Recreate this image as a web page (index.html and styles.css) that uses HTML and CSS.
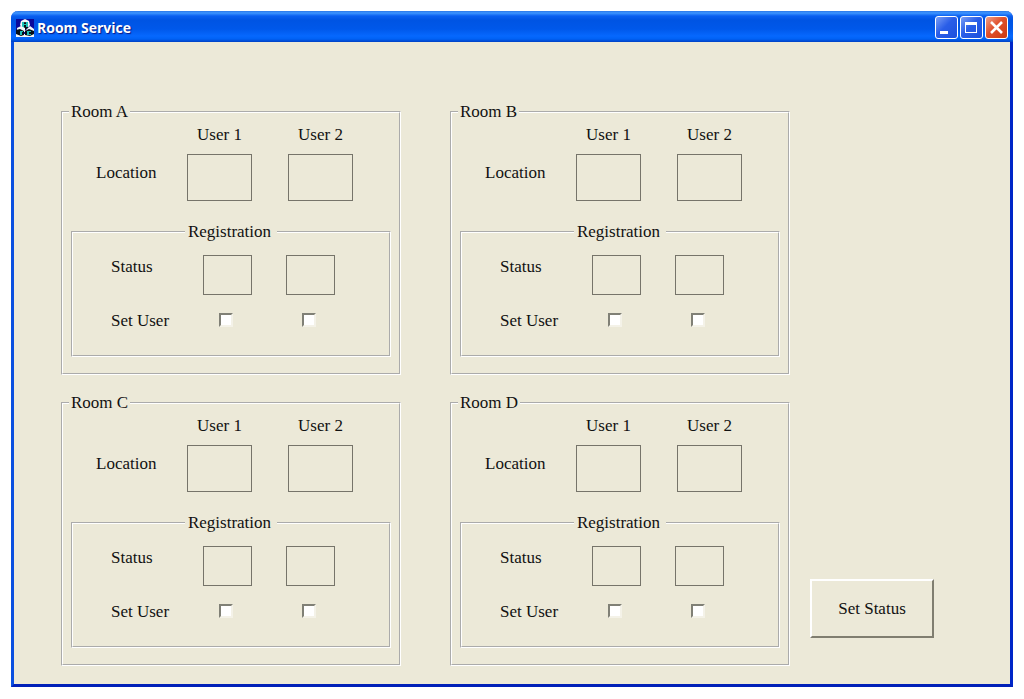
FILE: index.html
```html
<!DOCTYPE html>
<html lang="en">
<head>
    <meta charset="UTF-8">
    <meta name="viewport" content="width=device-width, initial-scale=1.0">
    <title>Room Service</title>
    <link rel="stylesheet" href="styles.css">
</head>
<body>

<div class="window">
    <!-- title bar -->
    <header class="titlebar">
        <svg class="app-icon" viewBox="0 0 18 18" aria-hidden="true">
            <rect width="18" height="18" fill="#0a0a9c"/>
            <path d="M0 15h18v3H0z" fill="#f4f8f8"/>
            <path d="M5 2l4-2 4 2 1 4-3 4H7L4 6z" fill="#f4f8f8"/>
            <path d="M6 4l3-1 3 1v5l-3 2-3-2z" fill="#061018"/>
            <path d="M6 3h2v2h2V3h2v5h-2V6H8v3H6z" fill="#1cc0b4"/>
            <path d="M1 9l4-2 4 2v3l5-5 4 3v3H1z" fill="#f4f8f8"/>
            <path d="M0 11l4-1 4 2v4l-3 1-5-2z" fill="#061018"/>
            <path d="M4 12h3v1H6v3H4z" fill="#1cc0b4"/>
            <path d="M9 12l4-2 5 2v3l-4 2-5-1z" fill="#061018"/>
            <path d="M11 12h4v1h-2v2h2v1h-4z" fill="#1cc0b4"/>
        </svg>
        <h1>Room Service</h1>
        <div class="window-buttons">
            <button type="button" class="win-btn" aria-label="Minimize">
                <svg viewBox="0 0 21 21"><path d="M4 14h8v3H4z" fill="#fff"/></svg>
            </button>
            <button type="button" class="win-btn" aria-label="Maximize">
                <svg viewBox="0 0 21 21"><path d="M4 5h12v11H4zM5 8v7h10V8z" fill="#fff" fill-rule="evenodd"/></svg>
            </button>
            <button type="button" class="win-btn win-close" aria-label="Close">
                <svg viewBox="0 0 21 21"><path d="M5 5l11 11M16 5L5 16" stroke="#fff" stroke-width="2.6"/></svg>
            </button>
        </div>
    </header>

    <main class="content">
        <div class="rooms">
            <!-- Room A -->
            <fieldset class="room">
                <legend>Room A</legend>
                <div class="location">
                    <span></span>
                    <span class="user">User 1</span>
                    <span class="user">User 2</span>
                    <span class="label-location">Location</span>
                    <div class="box-location"></div>
                    <div class="box-location"></div>
                </div>
                <fieldset class="registration">
                    <legend>Registration</legend>
                    <div class="status">
                        <span class="label-status">Status</span>
                        <div class="box-status"></div>
                        <div class="box-status"></div>
                        <label for="a-user1">Set User</label>
                        <input type="checkbox" id="a-user1">
                        <input type="checkbox" id="a-user2" aria-label="Set User 2">
                    </div>
                </fieldset>
            </fieldset>

            <!-- Room B -->
            <fieldset class="room">
                <legend>Room B</legend>
                <div class="location">
                    <span></span>
                    <span class="user">User 1</span>
                    <span class="user">User 2</span>
                    <span class="label-location">Location</span>
                    <div class="box-location"></div>
                    <div class="box-location"></div>
                </div>
                <fieldset class="registration">
                    <legend>Registration</legend>
                    <div class="status">
                        <span class="label-status">Status</span>
                        <div class="box-status"></div>
                        <div class="box-status"></div>
                        <label for="b-user1">Set User</label>
                        <input type="checkbox" id="b-user1">
                        <input type="checkbox" id="b-user2" aria-label="Set User 2">
                    </div>
                </fieldset>
            </fieldset>

            <!-- Room C -->
            <fieldset class="room">
                <legend>Room C</legend>
                <div class="location">
                    <span></span>
                    <span class="user">User 1</span>
                    <span class="user">User 2</span>
                    <span class="label-location">Location</span>
                    <div class="box-location"></div>
                    <div class="box-location"></div>
                </div>
                <fieldset class="registration">
                    <legend>Registration</legend>
                    <div class="status">
                        <span class="label-status">Status</span>
                        <div class="box-status"></div>
                        <div class="box-status"></div>
                        <label for="c-user1">Set User</label>
                        <input type="checkbox" id="c-user1">
                        <input type="checkbox" id="c-user2" aria-label="Set User 2">
                    </div>
                </fieldset>
            </fieldset>

            <!-- Room D -->
            <fieldset class="room">
                <legend>Room D</legend>
                <div class="location">
                    <span></span>
                    <span class="user">User 1</span>
                    <span class="user">User 2</span>
                    <span class="label-location">Location</span>
                    <div class="box-location"></div>
                    <div class="box-location"></div>
                </div>
                <fieldset class="registration">
                    <legend>Registration</legend>
                    <div class="status">
                        <span class="label-status">Status</span>
                        <div class="box-status"></div>
                        <div class="box-status"></div>
                        <label for="d-user1">Set User</label>
                        <input type="checkbox" id="d-user1">
                        <input type="checkbox" id="d-user2" aria-label="Set User 2">
                    </div>
                </fieldset>
            </fieldset>
        </div>

        <button type="button" class="set-status">Set Status</button>
    </main>
</div>

</body>
</html>
```
FILE: styles.css
```css
* {
    box-sizing: border-box;
}
body {
    margin: 0;
    padding: 11px;
    background: #fff;
    color: #111;
    font-family: "Liberation Serif", "Times New Roman", serif;
    font-size: 17px;
    line-height: 18px;
}

/* window frame */
.window {
    background: #ece9d8;
    border: 3px solid #0a50e0;
    border-top: 0;
    border-right-color: #0026c8;
    border-bottom-color: #0020b8;
    border-radius: 7px 7px 0 0;
}

/* title bar */
.titlebar {
    display: flex;
    align-items: center;
    gap: 3px;
    height: 31px;
    margin: 0 -3px;
    padding: 2px 5px 0;
    background: linear-gradient(#2a76e8 0, #3d95ff 2px, #0a5ff0 5px, #0054e3 9px, #0058ea 18px, #0668fe 25px, #0062f5 28px, #0040c4 31px);
    border-radius: 7px 7px 0 0;
}
.titlebar h1 {
    flex: 1;
    margin: 0;
    color: #fff;
    font-family: "Trebuchet MS", "Open Sans", sans-serif;
    font-size: 14px;
    font-weight: bold;
    text-shadow: 1px 1px 1px #0a1883;
}
.app-icon {
    width: 18px;
    height: 18px;
}
.window-buttons {
    display: flex;
    gap: 2px;
}
.win-btn {
    width: 23px;
    height: 23px;
    padding: 0;
    border: 1px solid #fff;
    border-radius: 3px;
    background: linear-gradient(135deg, #7a9ef5, #2a5ee8 45%, #1c50dc);
}
.win-btn svg {
    display: block;
}
.win-close {
    background: linear-gradient(135deg, #f0a088, #e0502c 45%, #cc3a10);
}

/* dialog area */
.content {
    display: flex;
    gap: 20px;
    padding: 61px 76px 18px 47px;
}
.rooms {
    flex: 1;
    display: grid;
    grid-template-columns: 1fr 1fr;
    gap: 19px 49px;
}
fieldset {
    min-width: 0;
    margin: 0;
    padding: 0;
    border: 2px groove #fff;
}
.room {
    padding: 5px 8px 16px;
}
.room > legend {
    margin-left: -2px;
    padding: 0 2px;
}

/* location boxes */
.location {
    display: grid;
    grid-template-columns: minmax(0, 1fr) 65px 65px;
    gap: 10px 36px;
    padding: 0 38px 22px 25px;
}
.user {
    text-align: center;
}
.label-location {
    padding-top: 10px;
}
.box-location {
    height: 47px;
    border: 1px solid #76746a;
}

/* registration group */
.registration legend {
    margin: 0 auto;
    padding: 0 6px 0 3px;
}
.status {
    display: grid;
    grid-template-columns: 1fr 49px 49px;
    gap: 17px 34px;
    padding: 14px 54px 25px 38px;
}
.status label {
    white-space: nowrap;
}
.label-status {
    padding-top: 3px;
}
.box-status {
    height: 40px;
    border: 1px solid #76746a;
}
.status input {
    appearance: none;
    width: 14px;
    height: 14px;
    margin: 1px 16px;
    background: #fff;
    border: 2px solid;
    border-color: #808076 #f4f2e8 #f4f2e8 #808076;
}

.set-status {
    align-self: flex-end;
    width: 124px;
    height: 59px;
    margin-bottom: 28px;
    padding: 0;
    background: #ece9d8;
    border: 2px solid;
    border-color: #fff #807e70 #807e70 #fff;
    color: #111;
    font: inherit;
}
```
